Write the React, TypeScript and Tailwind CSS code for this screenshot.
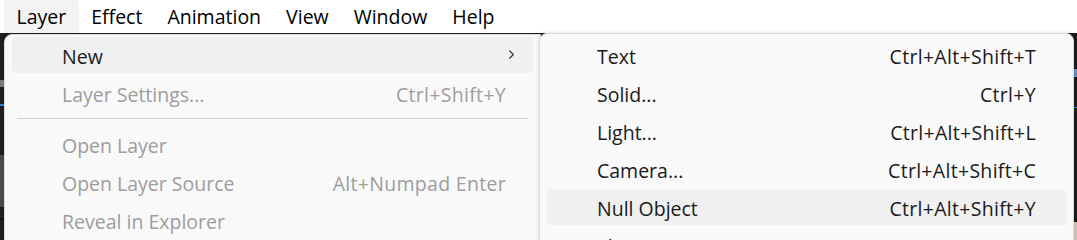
import { ChevronRight } from 'lucide-react';

type Item = { label: string; shortcut?: string; disabled?: boolean; active?: boolean; submenu?: boolean };

const mainItems: (Item | 'sep')[] = [
  { label: 'New', submenu: true, active: true },
  { label: 'Layer Settings...', shortcut: 'Ctrl+Shift+Y', disabled: true },
  'sep',
  { label: 'Open Layer', disabled: true },
  { label: 'Open Layer Source', shortcut: 'Alt+Numpad Enter', disabled: true },
  { label: 'Reveal in Explorer', disabled: true },
];

const newItems: Item[] = [
  { label: 'Text', shortcut: 'Ctrl+Alt+Shift+T' },
  { label: 'Solid...', shortcut: 'Ctrl+Y' },
  { label: 'Light...', shortcut: 'Ctrl+Alt+Shift+L' },
  { label: 'Camera...', shortcut: 'Ctrl+Alt+Shift+C' },
  { label: 'Null Object', shortcut: 'Ctrl+Alt+Shift+Y', active: true },
  { label: 'Shape Layer' },
];

const menuBar = ['Layer', 'Effect', 'Animation', 'View', 'Window', 'Help'];

function Row({ item, pr }: { item: Item; pr: string }) {
  return (
    <div className="h-[38px] px-[7px] py-[1px]">
      <div
        className={`flex h-full items-center rounded-[4px] pt-[3px] pl-[50px] ${pr} ${
          item.active ? 'bg-[#f0f0f0]' : ''
        } ${item.disabled ? 'text-[#9d9d9d]' : 'text-[#1a1a1a]'}`}
      >
        <span className="flex-1">{item.label}</span>
        {item.shortcut && <span className="tracking-[0.3px]">{item.shortcut}</span>}
        {item.submenu && <ChevronRight className="-mt-[4px] h-[15px] w-[15px] text-[#333]" strokeWidth={1.75} />}
      </div>
    </div>
  );
}

export default function App() {
  return (
    <div
      className="h-[240px] w-[1077px] overflow-hidden bg-[#1c1c1c] text-[19.5px] leading-none"
      style={{ fontFamily: '"Open Sans", "Noto Sans", sans-serif' }}
    >
      <div className="flex h-[33px] items-stretch bg-white pl-[4px] text-black">
        {menuBar.map((m, i) => (
          <div
            key={m}
            className={`flex items-center rounded-t-[4px] px-[12.5px] ${i === 0 ? 'bg-[#f3f3f3]' : ''}`}
          >
            {m}
          </div>
        ))}
      </div>

      <div className="flex">
        {/* app content peeking out on the left */}
        <div className="flex w-[4px] flex-col bg-[#1e1e1e]">
          <div className="mt-[47px] h-[7px] bg-[#7a7a7a]" />
          <div className="mt-[17px] h-[2px] bg-[#2f7fd6]" />
          <div className="mt-[49px] h-[52px] bg-[#4a4a4a]" />
          <div className="mt-[11px] h-[2px] bg-[#111]" />
        </div>

        <div className="mt-[1px] h-[240px] w-[537px] rounded-tl-[8px] border border-[#dcdcdc] bg-[#f9f9f9] pt-[1px]">
          {mainItems.map((it, i) =>
            it === 'sep' ? (
              <div key={i} className="px-[12px] py-[6px]">
                <div className="h-[1px] bg-[#d4d4d4]" />
              </div>
            ) : (
              <Row key={i} item={it} pr={it.submenu ? 'pr-[14px]' : 'pr-[27px]'} />
            )
          )}
        </div>

        <div className="-ml-[2px] h-[240px] w-[535px] rounded-t-[8px] border border-[#dcdcdc] bg-[#f9f9f9] pt-[2px] shadow-[0_0_4px_rgba(0,0,0,0.15)]">
          {newItems.map((it, i) => (
            <Row key={i} item={it} pr="pr-[30px]" />
          ))}
        </div>

        {/* app content peeking out on the right */}
        <div className="flex flex-1 flex-col bg-[#1a1a1a]">
          <div className="mt-[36px] h-[8px] w-[3px] bg-[#5b8fc7]" />
          <div className="mt-[30px] h-[1px] bg-[#3d7fd1]" />
          <div className="mt-[114px] flex-1 bg-[#c9c2b4]" />
        </div>
      </div>
    </div>
  );
}
